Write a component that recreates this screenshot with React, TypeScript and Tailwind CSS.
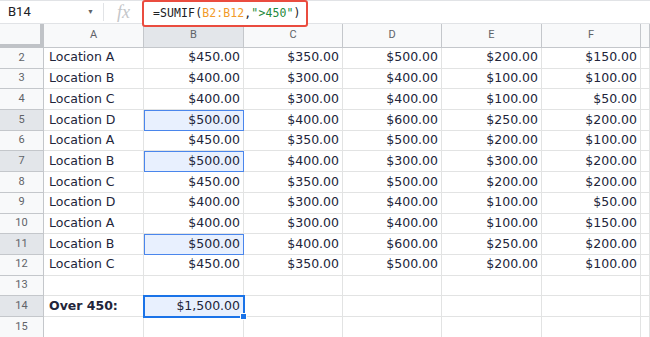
import React from 'react';

type Row = { n: number; label?: string; vals?: number[]; bold?: boolean };

const rows: Row[] = [
    { n: 2, label: 'Location A', vals: [450, 350, 500, 200, 150] },
    { n: 3, label: 'Location B', vals: [400, 300, 400, 100, 100] },
    { n: 4, label: 'Location C', vals: [400, 300, 400, 100, 50] },
    { n: 5, label: 'Location D', vals: [500, 400, 600, 250, 200] },
    { n: 6, label: 'Location A', vals: [450, 350, 500, 200, 100] },
    { n: 7, label: 'Location B', vals: [500, 400, 300, 300, 200] },
    { n: 8, label: 'Location C', vals: [450, 350, 500, 200, 200] },
    { n: 9, label: 'Location D', vals: [400, 300, 400, 100, 50] },
    { n: 10, label: 'Location A', vals: [400, 300, 400, 100, 150] },
    { n: 11, label: 'Location B', vals: [500, 400, 600, 250, 200] },
    { n: 12, label: 'Location C', vals: [450, 350, 500, 200, 100] },
    { n: 13 },
    { n: 14, label: 'Over 450:', vals: [1500], bold: true },
    { n: 15 },
];

const highlighted = [5, 7, 11];
const cols = ['A', 'B', 'C', 'D', 'E', 'F', ''];

const money = (v: number) =>
    '$' + v.toLocaleString('en-US', { minimumFractionDigits: 2, maximumFractionDigits: 2 });

const gridCols = 'grid grid-cols-[44px_100px_100px_99px_99px_100px_99px_1fr]';

export default function App() {
    return (
        <div className="w-[650px] h-[337px] overflow-hidden bg-white" style={{ fontFamily: 'Roboto, "Liberation Sans", sans-serif' }}>
            {/* formula bar */}
            <div className="relative flex items-center h-[24px] border-t border-b border-[#e1e3e6]">
                <div className="flex items-center w-[103px] pl-[8px] pr-[9px] justify-between">
                    <span className="text-[13px] text-[#202124]">B14</span>
                    <span className="text-[7px] text-[#5f6368]">▼</span>
                </div>
                <div className="w-px h-[18px] bg-[#e1e3e6]" />
                <div className="w-[39px] flex justify-center">
                    <span className="text-[18px] italic text-[#c4c6c9] leading-none" style={{ fontFamily: '"Liberation Serif", serif' }}>
                        fx
                    </span>
                </div>
                <div className="absolute left-[142px] top-[-1px] w-[166px] h-[27px] rounded-[3px] border-[2.5px] border-[#ea4c3f] bg-white z-10 flex items-center pl-[9px]">
                    <span className="text-[11.5px] tracking-[0.1px] text-[#202124] whitespace-pre" style={{ fontFamily: '"DejaVu Sans Mono", monospace' }}>
                        =SUMIF(<span className="text-[#f29b2a]">B2:B12</span>,<span className="text-[#1e8a3c]">"&gt;450"</span>)
                    </span>
                </div>
            </div>

            {/* column headers */}
            <div className={`${gridCols} h-[24px] bg-[#f8f9fa] text-[11px] text-[#5f6368]`}>
                <div className="border-r-[4px] border-b-[4px] border-[#c0c3c7] bg-[#f8f9fa]" />
                {cols.map((c, i) => (
                    <div
                        key={i}
                        className={`flex items-center justify-center border-r border-b border-[#c4c7cb] ${c === 'B' ? 'bg-[#e3e6ea]' : ''}`}
                    >
                        {c}
                    </div>
                ))}
            </div>

            {/* rows */}
            {rows.map((r) => {
                const sel = highlighted.includes(r.n) || r.n === 14;
                return (
                    <div key={r.n} className={`${gridCols} h-[20.7px]`}>
                        <div
                            className={`flex items-center justify-center text-[11px] text-[#5f6368] border-r border-b border-[#c4c7cb] ${sel ? 'bg-[#e3e6ea]' : 'bg-[#f8f9fa]'}`}
                        >
                            {r.n}
                        </div>
                        {cols.map((_, ci) => {
                            let content: React.ReactNode = null;
                            let cls = 'justify-end pr-[3px]';
                            if (ci === 0 && r.label) {
                                content = r.label;
                                cls = 'justify-start pl-[5px]';
                            } else if (ci > 0 && ci < 6 && r.vals && r.vals[ci - 1] !== undefined) {
                                content = money(r.vals[ci - 1]);
                            }
                            const hl = ci === 1 && highlighted.includes(r.n);
                            const active = ci === 1 && r.n === 14;
                            return (
                                <div
                                    key={ci}
                                    className={`relative flex items-center border-r border-b border-[#e2e3e3] text-[12.5px] text-[#22253a] whitespace-nowrap ${cls} ${r.bold && ci === 0 ? 'font-bold' : ''} ${hl ? 'bg-[#e8f0fe] outline outline-1 -outline-offset-1 outline-[#4a86ec] z-[1]' : ''} ${active ? 'bg-[#e8f0fe] outline-2 outline -outline-offset-1 outline-[#1a73e8] z-[2]' : ''}`}
                                    style={{ fontFamily: '"DejaVu Sans", Verdana, sans-serif' }}
                                >
                                    {content}
                                    {active && (
                                        <div className="absolute right-[-4px] bottom-[-4px] w-[7px] h-[7px] bg-[#1a73e8] border border-white" />
                                    )}
                                </div>
                            );
                        })}
                    </div>
                );
            })}
        </div>
    );
}
